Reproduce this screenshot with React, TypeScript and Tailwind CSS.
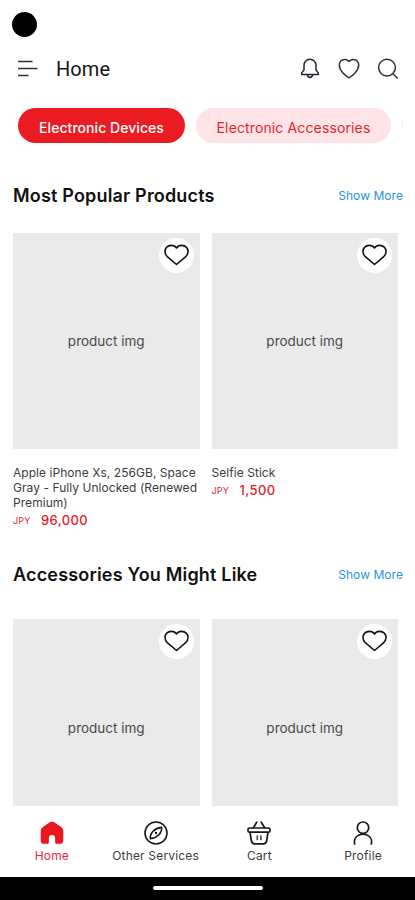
import type { ReactNode } from "react";

interface Product {
  id: number;
  name?: string;
  price?: string;
}

const POPULAR: Product[] = [
  { id: 1, name: "Apple iPhone Xs, 256GB, Space Gray - Fully Unlocked (Renewed Premium)", price: "96,000" },
  { id: 2, name: "Selfie Stick", price: "1,500" },
];

const ACCESSORIES: Product[] = [{ id: 3 }, { id: 4 }];

function MenuIcon() {
  return (
    <svg width="20" height="18" viewBox="0 0 20 18" fill="none" stroke="#303037" strokeWidth="1.5">
      <path d="M0 1.5h14.5M0 8.5h19.5M0 15.5h10.5" />
    </svg>
  );
}

function BellIcon() {
  return (
    <svg width="20" height="22" viewBox="0 0 20 22" fill="none" stroke="#25253a" strokeWidth="1.5" strokeLinejoin="round">
      <path d="M4 12V7.300a6 6 0 0 1 12 0V12l2.300 2.900v1.600H1.700v-1.600z" />
      <path d="M7.300 16.800c.5 1.900 1.400 2.700 2.700 2.700s2.200-.8 2.700-2.700" />
    </svg>
  );
}

function HeaderHeartIcon() {
  return (
    <svg width="22" height="22" viewBox="0 0 22 22" fill="none" stroke="#303037" strokeWidth="1.5" strokeLinejoin="round">
      <path d="M11 3.5C9.7 2 8.1 1.3 6.3 1.5 3.2 1.7 1.3 4.3 1.3 7.3c0 5.2 6 10.500 9.7 12.600 3.700-2.100 9.700-7.400 9.700-12.600 0-3-1.900-5.600-5-5.800-1.800-.2-3.400.5-4.700 2z" />
    </svg>
  );
}

function SearchIcon() {
  return (
    <svg width="22" height="22" viewBox="0 0 22 22" fill="none" stroke="#303037" strokeWidth="1.5">
      <circle cx="10" cy="9.600" r="8.400" />
      <path d="m15.700 15.500 5 5" />
    </svg>
  );
}

function HeartIcon() {
  return (
    <svg width="25" height="22" viewBox="0 0 26 22" fill="none" stroke="#111" strokeWidth="1.6" strokeLinejoin="round">
      <path d="M13 3.700C11.800 1.700 10 1 7.600 1 3.700 1 1 3.800 1 7.300c0 2.400 1 4 2.700 5.700L13 20.900l9.300-7.900C24 11.300 25 9.700 25 7.300 25 3.800 22.300 1 18.400 1c-2.400 0-4.200.7-5.400 2.700z" />
    </svg>
  );
}

function HomeIcon() {
  return (
    <svg width="24" height="24" viewBox="0 0 24 24" fill="#eb1720">
      <path d="M9.900 1.200a4 4 0 0 1 4.300 0l6.300 4.200c1.900 1.300 2.800 2.700 2.800 5v9.300c0 2-1.200 3.100-3.100 3.100H17c-1.200 0-1.900-.7-1.900-1.900v-3.800a3.100 3.100 0 0 0-6.200 0v3.800c0 1.200-.7 1.900-1.900 1.900H3.800C1.900 22.800.7 21.700.7 19.700v-9.300c0-2.300.9-3.700 2.800-5z" />
    </svg>
  );
}

function CompassIcon() {
  return (
    <svg width="24" height="24" viewBox="0 0 24 24" fill="none" stroke="#18181b" strokeWidth="1.6" strokeLinejoin="round">
      <circle cx="12" cy="12" r="11" />
      <path d="M17.600 6.400c.4 3-.9 5.500-2.700 7.300-1.900 2-4.700 3.500-8.500 3.900-.4-3 .9-5.500 2.700-7.300 1.900-2 4.700-3.500 8.500-3.900z" />
      <circle cx="12" cy="12" r="1.200" fill="#18181b" stroke="none" />
    </svg>
  );
}

function BasketIcon() {
  return (
    <svg width="24" height="24" viewBox="0 0 24 24" fill="none" stroke="#18181b" strokeWidth="1.7" strokeLinejoin="round">
      <rect x="1" y="7" width="22" height="4.200" rx="1.400" />
      <path d="M3 11.200l1.300 8.300c.4 2.300 1.300 3.300 3.300 3.300h8.800c2 0 2.900-1 3.300-3.300l1.300-8.300" />
      <path d="M6.400 6.800 9.700 1.200M17.600 6.800l-3.300-5.600" strokeLinecap="round" />
      <path d="M10.300 15v3.500M13.900 15v3.500" strokeLinecap="round" stroke="#52525b" />
    </svg>
  );
}

function ProfileIcon() {
  return (
    <svg width="24" height="24" viewBox="0 0 24 24" fill="none" stroke="#18181b" strokeWidth="1.7" strokeLinecap="round">
      <circle cx="12" cy="6.700" r="5.700" />
      <path d="M3.700 23c-.9-3.800.7-7.500 4.300-9 2.600-1 5.400-1 8 0 3.600 1.500 5.200 5.200 4.300 9" />
    </svg>
  );
}

function SectionHeader({ title }: { title: string }) {
  return (
    <div className="flex h-6 items-center justify-between pl-[13px] pr-3">
      <h2 className="text-[18px] leading-6 font-semibold tracking-[0.18px] text-[#111]">{title}</h2>
      <a className="text-[12px] leading-6 tracking-[0.05px] text-[#2b93dc]">Show More</a>
    </div>
  );
}

function ProductCard({ product, imageClass }: { product: Product; imageClass: string }) {
  return (
    <div className="w-[186.5px]">
      <div className={`relative flex items-center justify-center bg-[#eaeaea] ${imageClass}`}>
        <span className="text-[13.5px] leading-5 text-[#4b4b4b]">product img</span>
        <button className="absolute top-[5px] right-[6px] flex size-[35px] items-center justify-center rounded-full bg-white">
          <HeartIcon />
        </button>
      </div>
      {product.name && (
        <div className="pt-4">
          <p className="text-[12px] leading-[15px] tracking-[0.05px] text-[#3c3c3c]">{product.name}</p>
          <p className="mt-[3px] flex h-4 items-center text-[#e21b2c]">
            <span className="w-7 text-[9px] tracking-[0.2px]">JPY</span>
            <span className="text-[13px] font-medium tracking-[0.4px]">{product.price}</span>
          </p>
        </div>
      )}
    </div>
  );
}

function NavItem({ icon, label, active }: { icon: ReactNode; label: string; active?: boolean }) {
  return (
    <a className="flex flex-1 flex-col items-center pt-[15px]">
      {icon}
      <span
        className={`mt-[3px] text-[12px] leading-4 tracking-[0.18px] whitespace-nowrap ${active ? "text-[#eb2b3a]" : "text-[#3c3c3c]"}`}
      >
        {label}
      </span>
    </a>
  );
}

export default function App() {
  return (
    <div className="flex h-[900px] w-[415px] flex-col overflow-hidden bg-white font-['Inter',sans-serif]">
      {/* Status bar with the camera cutout */}
      <div className="flex h-12 shrink-0 items-center pl-3">
        <div className="size-[25px] rounded-full bg-black" />
      </div>

      <header className="flex h-12 shrink-0 items-center border-b border-[#fdfdfd] pt-px pr-4 pl-[18px] pb-[7px]">
        <MenuIcon />
        <h1 className="ml-[18px] font-['Roboto',sans-serif] text-[20px] leading-6 tracking-[0.1px] text-[#151515]">Home</h1>
        <div className="ml-auto flex items-center gap-[17.5px]">
          <BellIcon />
          <HeaderHeartIcon />
          <SearchIcon />
        </div>
      </header>

      <main className="min-h-0 flex-1 overflow-hidden">
        {/* Category chips */}
        <div className="mr-3 flex gap-[11px] overflow-hidden pt-3 pl-[18px] text-[14px] leading-5">
          <div className="h-[34.5px] w-[167px] shrink-0 rounded-full bg-[#eb1b22] pt-[10px] text-center font-medium tracking-[0.05px] text-white">
            Electronic Devices
          </div>
          <div className="h-[34.5px] w-[195px] shrink-0 rounded-full bg-[#fee4e6] pt-[10px] text-center tracking-[0.13px] text-[#e3262f]">
            Electronic Accessories
          </div>
          <div className="h-[34.5px] w-[120px] shrink-0 rounded-full bg-[#fee4e6]" />
        </div>

        <section className="pt-[41px]">
          <SectionHeader title="Most Popular Products" />
          <div className="flex gap-3 pt-[25px] pl-[13px]">
            {POPULAR.map((p) => (
              <ProductCard key={p.id} product={p} imageClass="h-[216px]" />
            ))}
          </div>
        </section>

        <section className="pt-[34px]">
          <SectionHeader title="Accessories You Might Like" />
          <div className="flex gap-3 pt-8 pl-[13px]">
            {ACCESSORIES.map((p) => (
              <ProductCard key={p.id} product={p} imageClass="h-[218px]" />
            ))}
          </div>
        </section>
      </main>

      <nav className="flex h-[71px] shrink-0 bg-white">
        <NavItem icon={<HomeIcon />} label="Home" active />
        <NavItem icon={<CompassIcon />} label="Other Services" />
        <NavItem icon={<BasketIcon />} label="Cart" />
        <NavItem icon={<ProfileIcon />} label="Profile" />
      </nav>

      {/* System gesture bar */}
      <div className="flex h-[23px] shrink-0 justify-center bg-black pt-[9px]">
        <div className="h-1 w-[110px] rounded-full bg-white" />
      </div>
    </div>
  );
}
